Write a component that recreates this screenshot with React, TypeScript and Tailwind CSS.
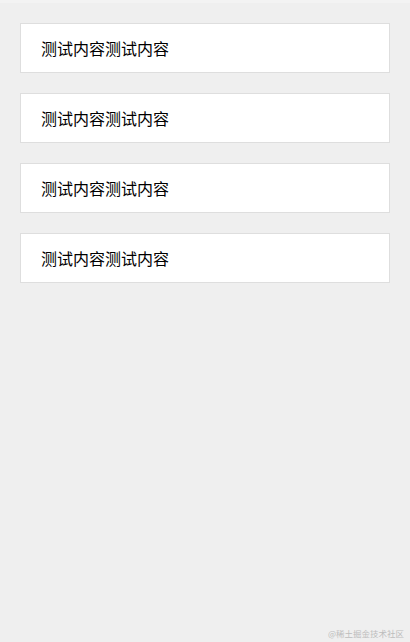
export default function App() {
  const items = [1, 2, 3, 4]
  return (
    <div
      className="relative h-[642px] w-[410px] overflow-hidden bg-[#efefef] pt-[23px]"
      style={{ fontFamily: '"Noto Sans CJK SC", "Noto Sans", sans-serif' }}
    >
      <div className="h-[3px] absolute top-0 left-0 right-0 bg-[#f3f3f3]" />
      <div className="flex flex-col gap-[20px] px-[20px]">
        {items.map((i) => (
          <div
            key={i}
            className="flex h-[50px] items-center border border-[#dedede] bg-white pl-[20px] text-[16px] text-black"
          >
            测试内容测试内容
          </div>
        ))}
      </div>
      <div className="absolute bottom-[3px] right-[6px] text-[8.5px] leading-[12px] text-[#bdbdbd]">@稀土掘金技术社区</div>
    </div>
  )
}
